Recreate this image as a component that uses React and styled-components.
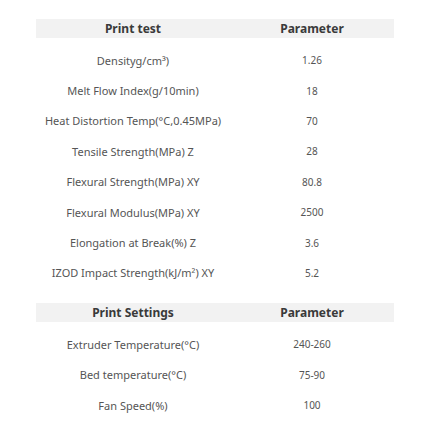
import React from 'react'
import styled, { createGlobalStyle } from 'styled-components'

const GlobalStyle = createGlobalStyle`
  html, body { margin: 0; padding: 0; background: #ffffff; }
  body { font-family: "Noto Sans", "Open Sans", sans-serif; }
`

const Page = styled.div`
  width: 430px;
  height: 430px;
  padding: 19px 36px 0;
  box-sizing: border-box;
  display: flex;
  flex-direction: column;
  gap: 15px;
`

const Grid = styled.div`
  display: grid;
  grid-template-columns: 194px 1fr;
  padding-top: ${p => (p.$body ? '7px' : '0')};
  background: ${p => (p.$body ? 'transparent' : '#f2f2f2')};
`

const HeadCell = styled.div`
  height: 19px;
  display: flex;
  align-items: center;
  justify-content: center;
  font-size: 12px;
  font-weight: 700;
  color: #3a3a3a;
`

const Cell = styled.div`
  height: 30.4px;
  display: flex;
  align-items: center;
  justify-content: center;
  font-size: ${p => (p.$value ? '10px' : '11px')};
  color: #555555;
  white-space: nowrap;
`

const testRows = [
  ['Densityg/cm³)', '1.26'],
  ['Melt Flow Index(g/10min)', '18'],
  ['Heat Distortion Temp(°C,0.45MPa)', '70'],
  ['Tensile Strength(MPa) Z', '28'],
  ['Flexural Strength(MPa) XY', '80.8'],
  ['Flexural Modulus(MPa) XY', '2500'],
  ['Elongation at Break(%) Z', '3.6'],
  ['IZOD Impact Strength(kJ/m²) XY', '5.2'],
]

const settingRows = [
  ['Extruder Temperature(°C)', '240-260'],
  ['Bed temperature(°C)', '75-90'],
  ['Fan Speed(%)', '100'],
]

const ParamTable = ({ title, rows }) => (
  <div>
    <Grid>
      <HeadCell>{title}</HeadCell>
      <HeadCell>Parameter</HeadCell>
    </Grid>
    <Grid $body>
      {rows.map(([name, value]) => (
        <React.Fragment key={name}>
          <Cell>{name}</Cell>
          <Cell $value>{value}</Cell>
        </React.Fragment>
      ))}
    </Grid>
  </div>
)

export default function App() {
  return (
    <>
      <GlobalStyle />
      <Page>
        <ParamTable title="Print test" rows={testRows} />
        <ParamTable title="Print Settings" rows={settingRows} />
      </Page>
    </>
  )
}
